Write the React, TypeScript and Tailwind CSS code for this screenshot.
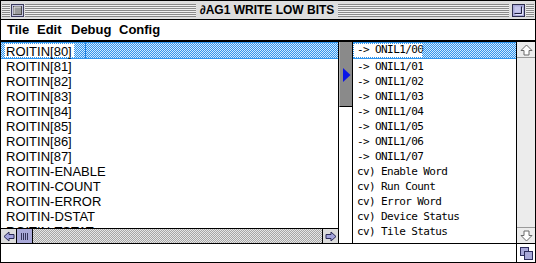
import React from "react";

const SANS = "font-['Liberation_Sans',Arial,sans-serif]";
const MONO = "font-['DejaVu_Sans_Mono',monospace]";
const CHECK_BLUE =
  "bg-[image:repeating-conic-gradient(#2f95ee_0%_25%,#d4e9fd_0%_50%)] bg-[length:2px_2px]";
const CHECK_GRAY =
  "bg-[image:repeating-conic-gradient(#a6a6a6_0%_25%,#e6e6e6_0%_50%)] bg-[length:2px_2px]";
const STRIPES =
  "bg-[image:repeating-linear-gradient(to_bottom,#8a8a8a_0px_1px,#f0f0f0_1px_2px)]";

const leftItems = [
  "ROITIN[80]",
  "ROITIN[81]",
  "ROITIN[82]",
  "ROITIN[83]",
  "ROITIN[84]",
  "ROITIN[85]",
  "ROITIN[86]",
  "ROITIN[87]",
  "ROITIN-ENABLE",
  "ROITIN-COUNT",
  "ROITIN-ERROR",
  "ROITIN-DSTAT",
  "ROITIN-TSTAT",
];

const rightItems = [
  "-> ONIL1/00",
  "-> ONIL1/01",
  "-> ONIL1/02",
  "-> ONIL1/03",
  "-> ONIL1/04",
  "-> ONIL1/05",
  "-> ONIL1/06",
  "-> ONIL1/07",
  "cv) Enable Word",
  "cv) Run Count",
  "cv) Error Word",
  "cv) Device Status",
  "cv) Tile Status",
];

const CloseBox = () => (
  <svg width="13" height="13" viewBox="0 0 13 13" className="shrink-0">
    <rect x="0.5" y="0.5" width="12" height="12" fill="#c9c9e4" stroke="#3c3c5c" />
    <rect x="2.5" y="2.5" width="8" height="8" fill="#9c9c9c" stroke="#4a4a4a" />
    <path d="M3 3h7M3 3v7" stroke="#e8e8e8" />
  </svg>
);

const ZoomBox = () => (
  <svg width="13" height="13" viewBox="0 0 13 13" className="shrink-0">
    <rect x="0.5" y="0.5" width="12" height="12" fill="#a9a9d9" stroke="#2c2c4c" />
    <path d="M2.5 9.5h7v-7" fill="none" stroke="#1c1c3c" />
    <path d="M2.5 2.5h6v6h-6z" fill="#c7c7ec" />
    <path d="M3.5 10.5h7v-7" fill="none" stroke="#e8e8f8" />
  </svg>
);

const ArrowLeft = () => (
  <svg width="12" height="11" viewBox="0 0 12 11">
    <path d="M1 5.5L6 1v2.5h5v4H6V10z" fill="#a3a3dc" stroke="#2a2a55" strokeLinejoin="miter" />
  </svg>
);

const ArrowRight = () => (
  <svg width="12" height="11" viewBox="0 0 12 11">
    <path d="M11 5.5L6 1v2.5H1v4h5V10z" fill="#a3a3dc" stroke="#2a2a55" strokeLinejoin="miter" />
  </svg>
);

const ArrowUp = () => (
  <svg width="13" height="12" viewBox="0 0 13 12">
    <path d="M6.5 1L12 6.5H9v4.5H4V6.5H1z" fill="#ffffff" stroke="#6a6a6a" />
  </svg>
);

const ArrowDown = () => (
  <svg width="13" height="12" viewBox="0 0 13 12">
    <path d="M6.5 11L12 5.5H9V1H4v4.5H1z" fill="#ffffff" stroke="#6a6a6a" />
  </svg>
);

const GrowBox = () => (
  <svg width="13" height="13" viewBox="0 0 13 13">
    <rect x="0.5" y="0.5" width="8" height="8" fill="#a9a9d9" stroke="#2c2c5c" />
    <rect x="4.5" y="4.5" width="8" height="8" fill="#a9a9d9" stroke="#2c2c5c" />
  </svg>
);

const TitleBar = () => (
  <div className="flex items-center h-[19px] border-b border-black bg-[#dedede]">
    <div className={`w-[8px] h-[13px] ml-[1px] ${STRIPES}`} />
    <div className="ml-[1px]">
      <CloseBox />
    </div>
    <div className={`flex-1 h-[13px] ml-[1px] ${STRIPES}`} />
    <div className={`px-[4px] text-[12px] font-bold leading-[13px] text-black ${SANS}`}>
      ∂AG1 WRITE LOW BITS
    </div>
    <div className={`flex-1 h-[13px] ${STRIPES}`} />
    <div className="ml-[3px]">
      <ZoomBox />
    </div>
    <div className={`w-[8px] h-[13px] ml-[1px] mr-[1px] ${STRIPES}`} />
  </div>
);

const MenuBar = () => (
  <div
    className={`flex h-[22px] border-b-2 border-black pl-[6px] text-[13px] font-bold leading-[20px] text-black ${SANS}`}
  >
    <span className="w-[30px]">Tile</span>
    <span className="w-[34px]">Edit</span>
    <span className="w-[48px]">Debug</span>
    <span>Config</span>
  </div>
);

const LeftPane = () => (
  <div className="w-[338px] border-r border-black flex flex-col">
    <div className={`h-[186px] overflow-hidden text-[13px] text-black ${SANS}`}>
      {leftItems.map((item, i) =>
        i === 0 ? (
          <div key={item} className={`flex h-[17px] border-y border-[#2f95ee] ${CHECK_BLUE}`}>
            <span className="ml-[3px] w-[71px] h-[15px] bg-white pl-[2px] leading-[17px] outline-1 outline-dotted -outline-offset-1 outline-[#2f95ee]">
              {item}
            </span>
            <div className="ml-[10px] w-px bg-[#1f7fe0]" />
          </div>
        ) : (
          <div key={item} className="h-[15px] leading-[15px] pl-[5px]">
            {item}
          </div>
        )
      )}
    </div>
    <div className="flex h-[15px] border-t border-black">
      <div className="w-[16px] border-r border-black bg-[#dcdcdc] flex items-center justify-center">
        <ArrowLeft />
      </div>
      <div className="w-[16px] border-r border-black bg-[#a9a9d9] flex items-center justify-center gap-[1px]">
        <div className="w-px h-[7px] bg-[#33335a]" />
        <div className="w-px h-[7px] bg-[#33335a]" />
        <div className="w-px h-[7px] bg-[#33335a]" />
        <div className="w-px h-[7px] bg-[#33335a]" />
      </div>
      <div className={`flex-1 ${CHECK_GRAY}`} />
      <div className="w-[16px] border-l border-black bg-[#dcdcdc] flex items-center justify-center">
        <ArrowRight />
      </div>
    </div>
  </div>
);

const Splitter = () => (
  <div className="w-[14px] border-r border-black flex flex-col">
    <div className="h-[65px] bg-[#8a8a8a] border-b border-black border-l border-l-[#b4b4b4] pt-[26px] pl-[3px]">
      <svg width="8" height="14" viewBox="0 0 8 14">
        <path d="M0 0L7.5 7L0 14z" fill="#0a14e8" />
      </svg>
    </div>
  </div>
);

const RightPane = () => (
  <div className={`w-[164px] border-r border-black overflow-hidden text-[11px] tracking-[-0.6px] text-black whitespace-pre ${MONO}`}>
    {rightItems.map((item, i) =>
      i === 0 ? (
        <div key={item} className={`flex h-[17px] border-y border-[#2f95ee] ${CHECK_BLUE}`}>
          <span className="w-[70px] h-[15px] bg-white pl-[4px] leading-[13px] outline-1 outline-dotted -outline-offset-1 outline-[#2f95ee]">
            {item}
          </span>
        </div>
      ) : (
        <div key={item} className="h-[15px] leading-[15px] pl-[4px]">
          {item}
        </div>
      )
    )}
  </div>
);

const VScroll = () => (
  <div className="w-[18px] bg-[#ececec] flex flex-col">
    <div className="h-[16px] border-b border-[#9a9a9a] flex items-center justify-center">
      <ArrowUp />
    </div>
    <div className="flex-1" />
    <div className="h-[16px] border-t border-[#9a9a9a] flex items-center justify-center">
      <ArrowDown />
    </div>
  </div>
);

export default function App() {
  return (
    <div className="w-[536px] h-[263px] border border-black bg-white flex flex-col overflow-hidden">
      <TitleBar />
      <MenuBar />
      <div className="flex h-[201px]">
        <LeftPane />
        <Splitter />
        <RightPane />
        <VScroll />
      </div>
      <div className="flex h-[19px] border-t border-black">
        <div className="flex-1 border-r border-black" />
        <div className="w-[18px] flex items-center justify-center">
          <GrowBox />
        </div>
      </div>
    </div>
  );
}
